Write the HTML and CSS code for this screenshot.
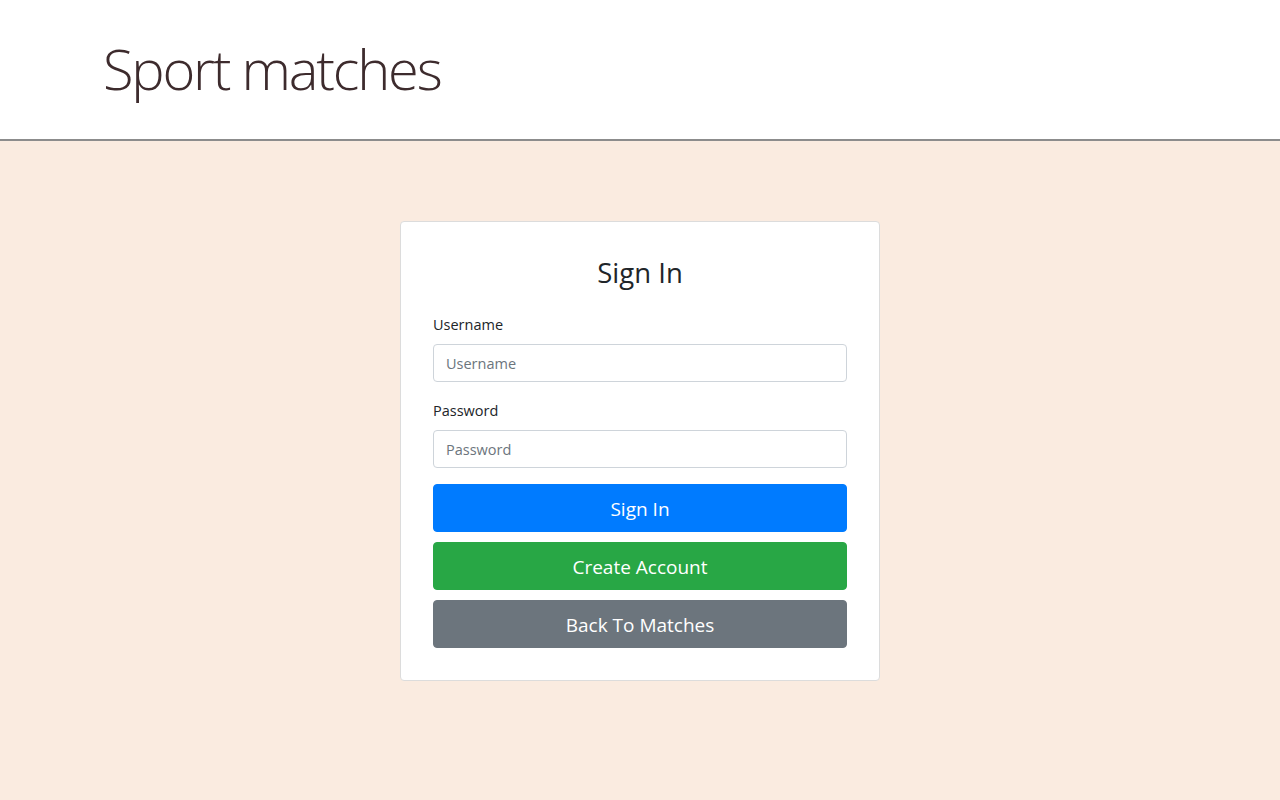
FILE: index.html
```html
<!DOCTYPE html>
<html lang="en">
<head>
<meta charset="utf-8">
<title>Sport matches</title>
<link rel="stylesheet" href="styles.css">
</head>
<body>
<header class="site-header">
  <h1 class="site-title">Sport matches</h1>
</header>
<main class="page">
  <section class="card">
    <h3 class="card-title">Sign In</h3>
    <form class="form">
      <div class="form-group">
        <label class="form-label" for="username">Username</label>
        <input class="form-control" id="username" type="text" placeholder="Username">
      </div>
      <div class="form-group">
        <label class="form-label" for="password">Password</label>
        <input class="form-control" id="password" type="password" placeholder="Password">
      </div>
      <div class="buttons">
        <button type="button" class="btn btn-primary">Sign In</button>
        <button type="button" class="btn btn-success">Create Account</button>
        <button type="button" class="btn btn-secondary">Back To Matches</button>
      </div>
    </form>
  </section>
</main>
</body>
</html>
```
FILE: styles.css
```css
* { box-sizing: border-box; }
html, body { margin: 0; padding: 0; height: 100%; }
body {
  font-family: "Open Sans", "Noto Sans", "Liberation Sans", sans-serif;
  font-size: 15px;
  color: #212529;
  background: #faebe0;
}
.site-header {
  background: #ffffff;
  height: 141px;
  border-bottom: 2px solid #8c8c8c;
  padding: 0 103px;
  display: flex;
  align-items: flex-start;
}
.site-title {
  margin: 28px 0 0 0;
  font-weight: 300;
  font-size: 56px;
  line-height: 80px;
  color: #3d2b2d;
  letter-spacing: -2.2px;
}
.page {
  display: flex;
  justify-content: center;
  padding-top: 80px;
}
.card {
  width: 480px;
  background: #fff;
  border: 1px solid #dcdcdc;
  border-radius: 4px;
  padding: 32px;
}
.card-title {
  margin: 2px 0 23px;
  text-align: center;
  font-weight: 400;
  font-size: 27.5px;
  line-height: 33px;
}
.form-group { margin-bottom: 16px; }
.form-label {
  display: block;
  font-size: 14.5px;
  line-height: 24px;
  padding-top: 1px;
  margin-bottom: 7px;
  color: #212529;
}
.form-control {
  display: block;
  width: 100%;
  height: 38px;
  padding: 6px 12px;
  font-family: inherit;
  font-size: 14.5px;
  color: #495057;
  border: 1px solid #ced4da;
  border-radius: 4px;
  background: #fff;
}
.form-control::placeholder { color: #6c757d; opacity: 1; }
.buttons {
  display: flex;
  flex-direction: column;
  gap: 10px;
}
.btn {
  display: block;
  width: 100%;
  height: 48px;
  padding: 2px 16px 0;
  border: 1px solid transparent;
  border-radius: 4px;
  font-family: inherit;
  font-size: 19px;
  color: #fff;
  cursor: pointer;
}
.btn-primary { background: #007bff; border-color: #007bff; }
.btn-success { background: #28a745; border-color: #28a745; }
.btn-secondary { background: #6c757d; border-color: #6c757d; }
```
